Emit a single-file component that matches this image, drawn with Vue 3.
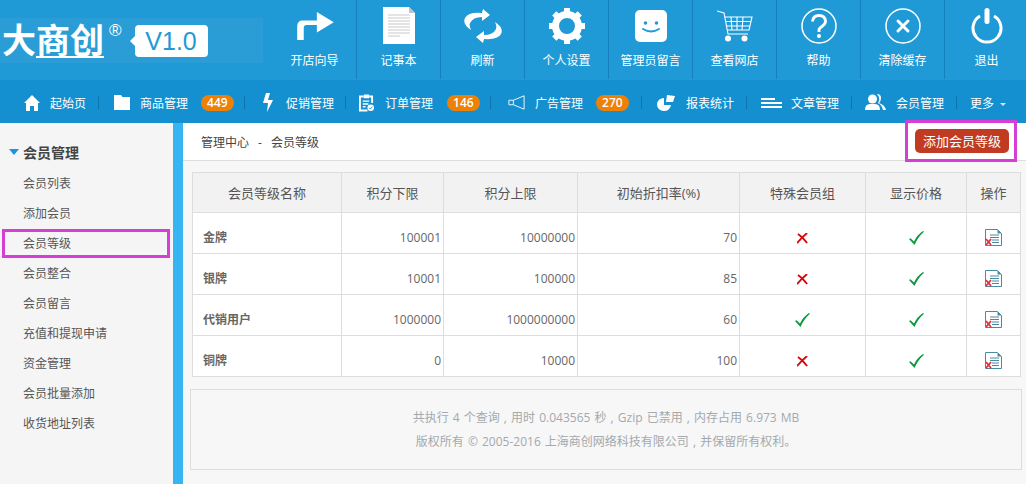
<script setup>
const tools = [
  { label: '开店向导', icon: 'arrow' },
  { label: '记事本', icon: 'note' },
  { label: '刷新', icon: 'refresh' },
  { label: '个人设置', icon: 'gear' },
  { label: '管理员留言', icon: 'smile' },
  { label: '查看网店', icon: 'cart' },
  { label: '帮助', icon: 'help' },
  { label: '清除缓存', icon: 'clear' },
  { label: '退出', icon: 'power' }
]

const navs = [
  { label: '起始页', icon: 'home', width: 99, pad: 24, gap: 10 },
  { label: '商品管理', icon: 'folder', badge: 449, width: 146, pad: 15, gap: 10 },
  { label: '促销管理', icon: 'bolt', width: 101, pad: 17, gap: 12 },
  { label: '订单管理', icon: 'clip', badge: 146, width: 145, pad: 13, gap: 11 },
  { label: '广告管理', icon: 'horn', badge: 270, width: 151, pad: 17, gap: 10 },
  { label: '报表统计', icon: 'pie', width: 105, pad: 13, gap: 10 },
  { label: '文章管理', icon: 'lines', width: 105, pad: 14, gap: 9 },
  { label: '会员管理', icon: 'users', width: 105, pad: 13, gap: 10 }
]

const menus = ['会员列表', '添加会员', '会员等级', '会员整合', '会员留言', '充值和提现申请', '资金管理', '会员批量添加', '收货地址列表']

const heads = ['会员等级名称', '积分下限', '积分上限', '初始折扣率(%)', '特殊会员组', '显示价格', '操作']

const rows = [
  { name: '金牌', min: 100001, max: 10000000, rate: 70, special: false },
  { name: '银牌', min: 10001, max: 100000, rate: 85, special: false },
  { name: '代销用户', min: 1000000, max: 1000000000, rate: 60, special: true },
  { name: '铜牌', min: 0, max: 10000, rate: 100, special: false }
]
</script>

<template>
  <div class="page">
    <header class="topbar">
      <div class="logo">
        <span class="logo-name">大商创</span>
        <sup class="logo-reg">®</sup>
        <span class="version">V1.0</span>
      </div>
      <div class="tools">
        <a v-for="t in tools" :key="t.label" class="tool">
          <span class="tool-icon">
            <svg v-if="t.icon === 'arrow'" width="38" height="30" viewBox="0 0 40 32"><path d="M1 31V16q0-6 6-6h15V1l18 11-18 11v-8H11q-3 0-3 3v13z" fill="#fff"/></svg>
            <svg v-else-if="t.icon === 'note'" width="32" height="37" viewBox="0 0 32 37"><path d="M0 0h26l6 6v31H0z" fill="#fff"/><path d="M26 0l6 6h-6z" fill="#b9c4cc"/><path d="M5 8h22M5 11h22M5 14h22M5 17h22M5 20h22M5 23h22M5 26h22M5 29h12" stroke="#dcdcdc" stroke-width="1.6"/></svg>
            <svg v-else-if="t.icon === 'refresh'" width="38" height="36" viewBox="0 0 38 36"><path d="M19 1l7 6-8 6v-4Q9 9 6 15q-1 3 1 7Q-2 16 1 10 4 4 18 5z" fill="#fff"/><path d="M19 35l-7-6 8-6v4q9 0 12-6 1-3-1-7 9 6 6 12-3 6-17 5z" fill="#fff"/></svg>
            <svg v-else-if="t.icon === 'gear'" width="36" height="36" viewBox="0 0 36 36"><circle cx="18" cy="18" r="11.500" fill="none" stroke="#fff" stroke-width="7"/><path d="M15 0h6v6h-6zM15 30h6v6h-6zM0 15h6v6H0zM30 15h6v6h-6z" fill="#fff"/><path d="M15 0h6v6h-6zM15 30h6v6h-6zM0 15h6v6H0zM30 15h6v6h-6z" fill="#fff" transform="rotate(45 18 18)"/></svg>
            <svg v-else-if="t.icon === 'smile'" width="32" height="32" viewBox="0 0 32 32"><rect width="32" height="32" rx="5" fill="#fff"/><circle cx="10.500" cy="13" r="1.800" fill="#1f9ad6"/><circle cx="21.500" cy="13" r="1.800" fill="#1f9ad6"/><path d="M8 19q8 5 16 0" fill="none" stroke="#1f9ad6" stroke-width="2" stroke-linecap="round"/></svg>
            <svg v-else-if="t.icon === 'cart'" width="36" height="32" viewBox="0 0 36 32"><path d="M0 1l7 2 4 21h20M8 7h27l-3 13H10.500M14 7l1 13M20 7v13M26 7l-1 13M9 11.500h25M10 16h23" fill="none" stroke="#fff" stroke-width="1.100"/><circle cx="11" cy="28.500" r="3" fill="#fff"/><circle cx="27.500" cy="28.500" r="3" fill="#fff"/></svg>
            <svg v-else-if="t.icon === 'help'" width="36" height="36" viewBox="0 0 36 36"><circle cx="18" cy="18" r="17" fill="none" stroke="#fff" stroke-width="1.500"/><path d="M11.500 13.500Q12 7.500 18 7.500t6.500 5.500q0 3-3 5t-3.500 3.500V24" fill="none" stroke="#fff" stroke-width="2.800"/><circle cx="18" cy="28" r="2" fill="#fff"/></svg>
            <svg v-else-if="t.icon === 'clear'" width="36" height="36" viewBox="0 0 36 36"><circle cx="18" cy="18" r="17" fill="none" stroke="#fff" stroke-width="1.500"/><path d="M13 13l10 10M23 13L13 23" stroke="#fff" stroke-width="3" stroke-linecap="round"/></svg>
            <svg v-else width="32" height="36" viewBox="0 0 32 36"><path d="M9 8a14 14 0 1 0 14 0" fill="none" stroke="#fff" stroke-width="3"/><rect x="13.500" y="0" width="5" height="16" rx="2.500" fill="#fff"/></svg>
          </span>
          <span class="tool-label">{{ t.label }}</span>
        </a>
      </div>
    </header>

    <nav class="nav">
      <a
        v-for="n in navs"
        :key="n.label"
        class="nav-item"
        :style="{ width: n.width + 'px', paddingLeft: n.pad + 'px', gap: n.gap + 'px' }"
      >
        <svg v-if="n.icon === 'home'" width="16" height="16" viewBox="0 0 16 16"><path d="M8 0l8 8h-2v8h-4v-5H6v5H2V8H0z" fill="#fff"/></svg>
        <svg v-else-if="n.icon === 'folder'" width="16" height="15" viewBox="0 0 16 15"><path d="M0 0h7l1.500 2H16v13H0z" fill="#fff"/></svg>
        <svg v-else-if="n.icon === 'bolt'" width="12" height="19" viewBox="0 0 12 19"><path d="M4 0h4L6 7h5l-6 12 1-9H1z" fill="#fff"/></svg>
        <svg v-else-if="n.icon === 'clip'" width="15" height="18" viewBox="0 0 16 18"><path d="M5 2H1v15h8M11 2h3v7" fill="none" stroke="#fff" stroke-width="2"/><rect x="5" y="0" width="6" height="4" rx="1" fill="#fff"/><path d="M4 7h7M4 10h6M4 13h3" stroke="#fff" stroke-width="1.500"/><circle cx="12.500" cy="14" r="3.500" fill="#fff"/><path d="M10.800 14l1.300 1.300 2.200-2.300" fill="none" stroke="#1490d0" stroke-width="1"/></svg>
        <svg v-else-if="n.icon === 'horn'" width="17" height="17" viewBox="0 0 19 19"><path d="M1 7h5l12-5v15L6 12H1zM6 7v5" fill="none" stroke="#fff" stroke-width="1"/></svg>
        <svg v-else-if="n.icon === 'pie'" width="21" height="16" viewBox="0 0 21 16"><path d="M9 3a7 6.500 0 1 0 7 7H9z" fill="#fff"/><path d="M12 0l8 1-2 6h-7z" fill="#fff"/></svg>
        <svg v-else-if="n.icon === 'lines'" width="21" height="10" viewBox="0 0 21 10"><path d="M0 1h14M0 5h21M0 9h21" stroke="#fff" stroke-width="1.800"/></svg>
        <svg v-else width="21" height="17" viewBox="0 0 21 17"><circle cx="7.500" cy="5" r="4.500" fill="#fff"/><path d="M0 16q0-6 5-6h5q5 0 5 6z" fill="#fff"/><path d="M12 0q4 0 4 4 0 3-2 5 6 2 7 7h-3q-1-5-5-7 2-3 1-6z" fill="#fff"/></svg>
        <span>{{ n.label }}</span>
        <span v-if="n.badge" class="badge">{{ n.badge }}</span>
      </a>
      <a class="nav-more">更多<i class="caret"></i></a>
    </nav>

    <div class="body">
      <aside class="side">
        <div class="side-title"><i class="side-arrow"></i>会员管理</div>
        <ul class="side-list">
          <li v-for="m in menus" :key="m" :class="{ active: m === '会员等级' }">{{ m }}</li>
        </ul>
      </aside>

      <main class="main">
        <div class="crumb">
          <span>管理中心<span class="crumb-sep">-</span>会员等级</span>
          <span class="add-mark"><a class="add-btn">添加会员等级</a></span>
        </div>

        <div class="content">
          <table class="grid">
            <colgroup>
              <col style="width:149px" /><col style="width:102px" /><col style="width:134px" /><col style="width:162px" /><col style="width:126px" /><col style="width:101px" /><col />
            </colgroup>
            <thead>
              <tr><th v-for="h in heads" :key="h">{{ h }}</th></tr>
            </thead>
            <tbody>
              <tr v-for="r in rows" :key="r.name">
                <td class="name">{{ r.name }}</td>
                <td class="num">{{ r.min }}</td>
                <td class="num">{{ r.max }}</td>
                <td class="num">{{ r.rate }}</td>
                <td class="mid">
                  <svg v-if="r.special" width="15" height="14" viewBox="0 0 15 14"><path d="M0 8l1.500-.8L5 10.500Q8 4 14 0l1 .8Q9 6 5.500 14z" fill="#0c9a3e"/></svg>
                  <svg v-else width="11" height="11" viewBox="0 0 12 12"><path d="M1 1q5 3 10 10M11 0Q5 5 0 11" fill="none" stroke="#d3090f" stroke-width="2"/></svg>
                </td>
                <td class="mid">
                  <svg width="15" height="14" viewBox="0 0 15 14"><path d="M0 8l1.500-.8L5 10.500Q8 4 14 0l1 .8Q9 6 5.500 14z" fill="#0c9a3e"/></svg>
                </td>
                <td class="mid">
                  <svg width="17" height="17" viewBox="0 0 17 17"><path d="M.5.5h12l4 4v12H.5z" fill="#fff" stroke="#4a8aa3"/><path d="M12.500.5v4h4z" fill="#4a8aa3"/><path d="M5 6h9M5 8.500h9M7 11h7M7 13.500h7" stroke="#4a8aa3"/><path d="M1 10l5 6M6 10l-5 6" stroke="#e0303a" stroke-width="1.800"/></svg>
                </td>
              </tr>
            </tbody>
          </table>

          <footer class="foot">
            <p>共执行 4 个查询 , 用时 0.043565 秒 , Gzip 已禁用 , 内存占用 6.973 MB</p>
            <p>版权所有 © 2005-2016 上海商创网络科技有限公司 , 并保留所有权利。</p>
          </footer>
        </div>
      </main>
    </div>
  </div>
</template>

<style>
html, body {
  margin: 0;
  overflow: hidden;
}
</style>

<style scoped>
.page {
  width: 1026px;
  height: 484px;
  overflow: hidden;
  font-family: "Open Sans", "Noto Sans CJK SC", sans-serif;
  font-size: 12px;
  color: #555;
}

.topbar {
  display: flex;
  height: 80px;
  background: #1f9ad6;
}
.logo {
  display: flex;
  align-items: center;
  width: 263px;
  height: 45px;
  margin: 18px 9px 0 0;
  background: #2a9dd6;
  color: #fff;
  flex: none;
}
.logo-name {
  position: relative;
  font-family: "Noto Sans CJK SC", sans-serif;
  font-size: 34px;
  font-weight: 700;
  margin-left: 2px;
  margin-top: -4px;
  line-height: 45px;
}
.logo-name::after {
  content: "";
  position: absolute;
  left: 34px;
  right: 0;
  bottom: 3px;
  height: 2px;
  background: #fff;
}
.logo-reg {
  font-size: 17px;
  margin: -20px 0 0 5px;
  font-family: "Liberation Sans", sans-serif;
  font-weight: 400;
}
.version {
  position: relative;
  margin-left: 13px;
  width: 73px;
  height: 32px;
  line-height: 32px;
  text-align: center;
  border-radius: 4px;
  background: #fff;
  color: #1f9ad6;
  font-family: "Liberation Sans", sans-serif;
  font-size: 25px;
}
.version::before {
  content: "";
  position: absolute;
  left: -5px;
  top: 11px;
  border-top: 5px solid transparent;
  border-bottom: 5px solid transparent;
  border-right: 5px solid #fff;
}
.tools {
  display: flex;
}
.tool {
  flex: none;
  width: 84px;
  height: 79px;
  display: flex;
  flex-direction: column;
  align-items: center;
  border-left: 1px solid #1580bb;
  box-sizing: border-box;
  color: #fff;
}
.tool:first-child {
  border-left-color: transparent;
}
.tool-icon {
  height: 37px;
  margin-top: 7px;
  display: flex;
  align-items: center;
  justify-content: center;
}
.tool-label {
  margin-top: 8px;
  line-height: 18px;
}

.nav {
  display: flex;
  align-items: center;
  height: 43px;
  background: #1490d0;
  color: #fff;
}
.nav-item {
  display: flex;
  align-items: center;
  height: 43px;
  padding-top: 2px;
  flex: none;
  box-sizing: border-box;
  position: relative;
}
.nav-item::after {
  content: "";
  position: absolute;
  right: 0;
  top: 16px;
  height: 13px;
  border-right: 1px solid #0d75ad;
}
.badge {
  margin-left: 3px;
  padding: 0 6px;
  height: 16px;
  line-height: 16px;
  border-radius: 8px;
  background: #ee8105;
  font-weight: 600;
}
.nav-more {
  margin-left: 13px;
  padding-top: 2px;
  display: flex;
  align-items: center;
}
.caret {
  margin-left: 6px;
  margin-top: 3px;
  border-left: 3px solid transparent;
  border-right: 3px solid transparent;
  border-top: 3px solid #cfe6f3;
}

.body {
  display: flex;
  height: 361px;
}
.side {
  width: 173px;
  flex: none;
  background: #f5f5f5;
}
.side-title {
  display: flex;
  align-items: center;
  margin: 19px 0 0 9px;
  height: 20px;
  font-size: 14px;
  font-weight: 700;
  color: #444;
}
.side-arrow {
  margin-right: 4px;
  border-left: 5px solid transparent;
  border-right: 5px solid transparent;
  border-top: 6px solid #1f92e0;
}
.side-list {
  list-style: none;
  margin: 7px 0 0;
  padding: 0;
}
.side-list li {
  height: 30px;
  line-height: 30px;
  padding-left: 23px;
  box-sizing: border-box;
}
.side-list li.active {
  width: 168px;
  margin-left: 2px;
  padding-left: 18px;
  border: 3px solid #d63fd6;
  height: 29px;
  line-height: 23px;
  margin-bottom: 1px;
}

.main {
  flex: 1;
  border-left: 10px solid #35b6f3;
  background: #f7f7f7;
  min-width: 0;
}
.crumb {
  height: 37px;
  background: #fff;
  border-bottom: 1px solid #ddd;
  display: flex;
  align-items: center;
  justify-content: space-between;
  padding-left: 18px;
  color: #444;
}
.crumb-sep {
  margin: 0 9px;
}
.add-mark {
  position: relative;
  align-self: flex-start;
  width: 112px;
  height: 42px;
  margin: -3px 9px 0 0;
  border: 3px solid #d63fd6;
  box-sizing: border-box;
  display: flex;
  align-items: center;
  justify-content: center;
}
.add-btn {
  width: 94px;
  height: 24px;
  margin-left: 2px;
  line-height: 24px;
  text-align: center;
  border-radius: 5px;
  background: #c13a22;
  color: #fff;
  font-size: 13px;
}
.content {
  padding: 11px 4px 0 7px;
}
.grid {
  width: 829px;
  margin-left: 2px;
  border-collapse: collapse;
  table-layout: fixed;
  background: #fff;
}
.grid th, .grid td {
  border: 1px solid #ddd;
  padding: 0 2px;
}
.grid th {
  height: 39px;
  background: #f2f2f2;
  font-size: 13px;
  font-weight: 400;
  color: #555;
}
.grid td {
  height: 41px;
  padding-top: 8px;
  box-sizing: border-box;
  color: #666;
}
.name {
  font-weight: 700;
  padding-left: 10px !important;
}
.num {
  text-align: right;
}
.mid {
  text-align: center;
}
.mid svg {
  vertical-align: middle;
}
.foot {
  margin-top: 12px;
  height: 81px;
  box-sizing: border-box;
  padding-top: 19px;
  border: 1px solid #ddd;
  background: #f7f7f7;
  text-align: center;
  word-spacing: 1px;
  color: #a3a9ad;
}
.foot p {
  margin: 0 0 6px;
  line-height: 18px;
}
</style>
